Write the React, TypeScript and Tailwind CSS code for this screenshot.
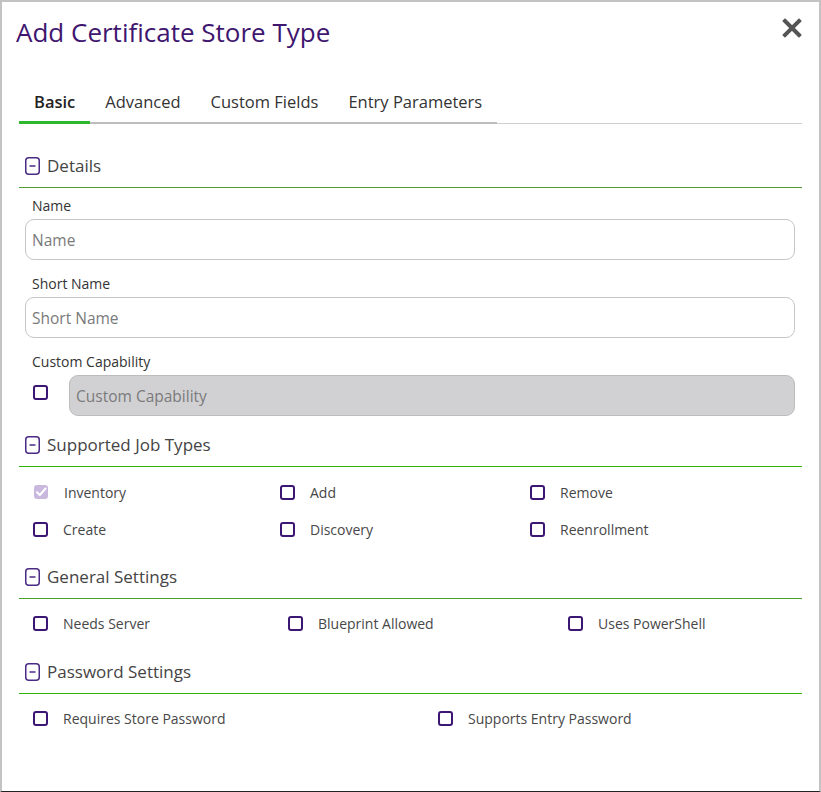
import { useState } from 'react';

const font = { fontFamily: '"Open Sans", Lato, sans-serif' };

const CollapseIcon = () => (
  <svg width="15" height="18" viewBox="0 0 15 18" className="shrink-0">
    <rect x="0.75" y="0.75" width="13.5" height="16.5" rx="3" fill="none" stroke="#4a2a85" strokeWidth="1.5" />
    <line x1="4.5" y1="9" x2="10.5" y2="9" stroke="#4a2a85" strokeWidth="1.5" />
  </svg>
);

const Checkbox = ({ checked = false, disabled = false }: { checked?: boolean; disabled?: boolean }) => {
  if (checked && disabled) {
    return (
      <svg width="16" height="16" viewBox="0 0 16 16" className="shrink-0">
        <rect x="1" y="1" width="14" height="14" rx="3" fill="#c9b9de" />
        <path d="M4 8.2l2.8 2.8L12.5 4.5" fill="none" stroke="#ffffff" strokeWidth="2" strokeLinecap="round" strokeLinejoin="round" />
      </svg>
    );
  }
  return <span className="block w-[15px] h-[15px] shrink-0 rounded-[3px] border-2 border-[#3b1672] bg-white" />;
};

const CheckItem = ({ label, checked, disabled }: { label: string; checked?: boolean; disabled?: boolean }) => (
  <div className="flex items-center h-[20px]">
    <Checkbox checked={checked} disabled={disabled} />
    <span className="ml-[15px] text-[14px] text-[#474747]">{label}</span>
  </div>
);

const SectionHeader = ({ title, lineColor }: { title: string; lineColor: string }) => (
  <div className={`flex items-center h-[22px] box-content pb-[10px] border-b ${lineColor}`}>
    <span className="ml-[6px]">
      <CollapseIcon />
    </span>
    <span className="ml-[7px] text-[17px] text-[#444] leading-[22px]">{title}</span>
  </div>
);

const Field = ({ label, placeholder }: { label: string; placeholder: string }) => (
  <div>
    <div className="pl-[13px] text-[14px] text-[#333] leading-[18px]">{label}</div>
    <input
      placeholder={placeholder}
      className="mt-[4px] ml-[6px] w-[770px] h-[41px] rounded-[9px] border border-[#c6c6c6] px-[6px] text-[15.5px] text-[#333] placeholder:text-[#7a7a7a] outline-none"
      style={font}
    />
  </div>
);

export default function App() {
  const [tab, setTab] = useState('Basic');
  const tabs = ['Basic', 'Advanced', 'Custom Fields', 'Entry Parameters'];

  return (
    <div
      className="w-[821px] h-[792px] bg-white border-2 border-[#c3c3c3] border-b-[#222] border-b-[1px] overflow-hidden"
      style={font}
    >
      <div className="flex items-start justify-between pl-[14px] pr-[17px] pt-[14px] h-[82px]">
        <h1 className="text-[26px] leading-[32px] text-[#40166f]">Add Certificate Store Type</h1>
        <button className="mt-[2px] text-[#555]">
          <svg width="20" height="20" viewBox="0 0 20 20">
            <path d="M3 3L17 17M17 3L3 17" stroke="currentColor" strokeWidth="4" strokeLinecap="square" />
          </svg>
        </button>
      </div>

      <div className="px-[17px]">
        <div className="flex border-b border-[#cfcfcf]">
          <div className="flex border-b-[2px] border-[#bdbdbd] -mb-[1px]">
            {tabs.map((t) => (
              <button
                key={t}
                onClick={() => setTab(t)}
                className={`px-[15px] h-[40px] text-[16.5px] -mb-[2px] border-b-[3px] ${
                  tab === t ? 'border-[#2eb82e] text-[#222] font-semibold' : 'border-transparent text-[#333]'
                }`}
              >
                {t}
              </button>
            ))}
          </div>
        </div>

        <div className="mt-[31px]">
          <SectionHeader title="Details" lineColor="border-[#4f9b35]" />
          <div className="mt-[9px] flex flex-col gap-[15px]">
            <Field label="Name" placeholder="Name" />
            <Field label="Short Name" placeholder="Short Name" />
            <div>
              <div className="pl-[13px] text-[14px] text-[#333] leading-[18px]">Custom Capability</div>
              <div className="mt-[4px] flex items-start">
                <span className="ml-[14px] mt-[10px]">
                  <Checkbox />
                </span>
                <input
                  disabled
                  placeholder="Custom Capability"
                  className="ml-[21px] w-[726px] h-[41px] rounded-[9px] border border-[#bcbcbc] bg-[#d1d1d4] px-[6px] text-[15.5px] placeholder:text-[#7a7a7a] outline-none"
                  style={font}
                />
              </div>
            </div>
          </div>
        </div>

        <div className="mt-[18px]">
          <SectionHeader title="Supported Job Types" lineColor="border-[#2cb400]" />
          <div className="mt-[15px] pl-[14px] grid grid-cols-[247px_250px_1fr] gap-y-[17px]">
            <CheckItem label="Inventory" checked disabled />
            <CheckItem label="Add" />
            <CheckItem label="Remove" />
            <CheckItem label="Create" />
            <CheckItem label="Discovery" />
            <CheckItem label="Reenrollment" />
          </div>
        </div>

        <div className="mt-[27px]">
          <SectionHeader title="General Settings" lineColor="border-[#4aa02c]" />
          <div className="mt-[14px] pl-[14px] grid grid-cols-[255px_280px_1fr]">
            <CheckItem label="Needs Server" />
            <CheckItem label="Blueprint Allowed" />
            <CheckItem label="Uses PowerShell" />
          </div>
        </div>

        <div className="mt-[28px]">
          <SectionHeader title="Password Settings" lineColor="border-[#2cb400]" />
          <div className="mt-[14px] pl-[14px] grid grid-cols-[405px_1fr]">
            <CheckItem label="Requires Store Password" />
            <CheckItem label="Supports Entry Password" />
          </div>
        </div>
      </div>
    </div>
  );
}
